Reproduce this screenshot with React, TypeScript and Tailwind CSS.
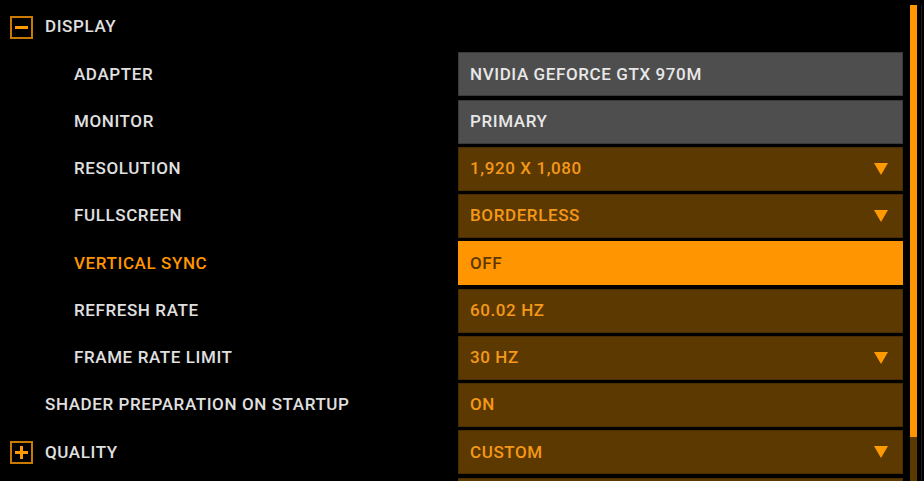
import { ReactNode } from "react";

type Row = {
  label: string;
  level: 0 | 1 | 2;
  icon?: "minus" | "plus";
  value?: string;
  kind?: "locked" | "select" | "toggle" | "active";
  dropdown?: boolean;
};

const rows: Row[] = [
  { label: "DISPLAY", level: 0, icon: "minus" },
  { label: "ADAPTER", level: 2, value: "NVIDIA GEFORCE GTX 970M", kind: "locked" },
  { label: "MONITOR", level: 2, value: "PRIMARY", kind: "locked" },
  { label: "RESOLUTION", level: 2, value: "1,920 X 1,080", kind: "select", dropdown: true },
  { label: "FULLSCREEN", level: 2, value: "BORDERLESS", kind: "select", dropdown: true },
  { label: "VERTICAL SYNC", level: 2, value: "OFF", kind: "active" },
  { label: "REFRESH RATE", level: 2, value: "60.02 HZ", kind: "select" },
  { label: "FRAME RATE LIMIT", level: 2, value: "30 HZ", kind: "select", dropdown: true },
  { label: "SHADER PREPARATION ON STARTUP", level: 1, value: "ON", kind: "select" },
  { label: "QUALITY", level: 0, icon: "plus", value: "CUSTOM", kind: "select", dropdown: true },
  { label: "", level: 1, value: "", kind: "select" },
];

const ToggleIcon = ({ type }: { type: "minus" | "plus" }) => (
  <div className="w-[23px] h-[23px] border-2 border-[#c97a00] flex items-center justify-center shrink-0">
    <svg width="15" height="15" viewBox="0 0 15 15">
      <rect x="1" y="6" width="13" height="3" fill="#ff9a00" />
      {type === "plus" && <rect x="6" y="1" width="3" height="13" fill="#ff9a00" />}
    </svg>
  </div>
);

const Caret = () => (
  <svg width="14" height="12" viewBox="0 0 14 12" className="shrink-0">
    <polygon points="0,0 14,0 7,12" fill="#ff9a00" />
  </svg>
);

const ValueBox = ({ row }: { row: Row }): ReactNode => {
  if (row.value === undefined) return null;
  const box =
    row.kind === "locked"
      ? "bg-[#4e4e4e] text-[#e8e8e8] border-[#3a3a3a]"
      : row.kind === "active"
      ? "bg-[#ff9500] text-[#5a3800] border-[#ff9500]"
      : "bg-[#5b3900] text-[#f5981a] border-[#4a2e00]";
  return (
    <div className={`w-[445px] h-full flex items-center justify-between pl-[11px] pr-[14px] border ${box}`}>
      <span>{row.value}</span>
      {row.dropdown && <Caret />}
    </div>
  );
};

export default function App() {
  return (
    <div
      className="w-[924px] h-[481px] bg-black overflow-hidden flex pt-[5px] text-[17px] font-medium tracking-[0.6px]"
      style={{ fontFamily: 'Roboto, "Liberation Sans", Arial, sans-serif' }}
    >
      <div className="w-[903px] flex flex-col gap-[3.25px] shrink-0">
        {rows.map((row, i) => (
          <div key={i} className="h-[44px] flex items-center shrink-0">
            <div
              className={`flex-1 flex items-center gap-[12px] ${
                row.level === 0 ? "pl-[10px]" : row.level === 1 ? "pl-[45px]" : "pl-[74px]"
              } ${row.kind === "active" ? "text-[#ff9500]" : "text-[#e0e0e0]"}`}
            >
              {row.icon && <ToggleIcon type={row.icon} />}
              <span>{row.label}</span>
            </div>
            <ValueBox row={row} />
          </div>
        ))}
      </div>

      {/* scrollbar */}
      <div className="ml-[7px] w-[7px] flex flex-col">
        <div className="h-[432px] bg-[#ff9500]" />
        <div className="flex-1 bg-[#5b3900]" />
      </div>
      <div className="ml-[4px] w-px bg-[#1c1c1c]" />
    </div>
  );
}
